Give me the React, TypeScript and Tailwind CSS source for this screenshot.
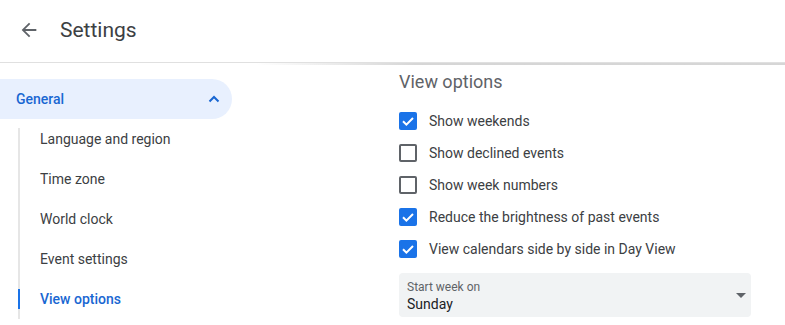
import React from "react";

const items = [
  { label: "Language and region", active: false },
  { label: "Time zone", active: false },
  { label: "World clock", active: false },
  { label: "Event settings", active: false },
  { label: "View options", active: true },
];

const options = [
  { label: "Show weekends", checked: true },
  { label: "Show declined events", checked: false },
  { label: "Show week numbers", checked: false },
  { label: "Reduce the brightness of past events", checked: true },
  { label: "View calendars side by side in Day View", checked: true },
];

function Checkbox({ checked }: { checked: boolean }) {
  if (checked) {
    return (
      <span className="flex h-[18px] w-[18px] shrink-0 items-center justify-center rounded-[2px] bg-[#1a73e8]">
        <svg width="18" height="18" viewBox="0 0 18 18">
          <polyline
            points="4,9.2 7.4,12.6 14,6"
            fill="none"
            stroke="#ffffff"
            strokeWidth="2"
          />
        </svg>
      </span>
    );
  }
  return (
    <span className="block h-[18px] w-[18px] shrink-0 rounded-[2px] border-2 border-[#5f6368]" />
  );
}

export default function App() {
  return (
    <div
      className="h-[325px] w-[785px] overflow-hidden bg-white"
      style={{ fontFamily: "Roboto, 'Noto Sans', sans-serif" }}
    >
      <header className="flex h-[63px] items-center border-b border-[#e0e0e0] pb-[2px] pl-[18px]">
        <svg width="22" height="22" viewBox="0 0 24 24" fill="#5f6368">
          <path d="M20 11H7.83l5.59-5.59L12 4l-8 8 8 8 1.41-1.41L7.83 13H20v-2z" />
        </svg>
        <span className="ml-[20px] text-[21px] leading-[28px] text-[#3c4043]">
          Settings
        </span>
      </header>
      <div className="flex">
        <nav className="w-[256px] shrink-0 pt-[16px]">
          <div className="flex h-10 w-[232px] items-center justify-between rounded-r-full bg-[#e8f0fe] pl-4 pr-[12px]">
            <span className="text-[14px] font-medium text-[#1967d2]">General</span>
            <svg width="12" height="8" viewBox="0 0 12 8">
              <polyline
                points="1.5,6.5 6,2 10.5,6.5"
                fill="none"
                stroke="#1967d2"
                strokeWidth="2"
              />
            </svg>
          </div>
          <div className="relative ml-[18px]">
            <span className="absolute bottom-0 left-0 top-[9px] w-[2px] bg-[#e6e6e6]" />
            {items.map((it) => (
              <div
                key={it.label}
                className="relative flex h-10 items-center pl-[22px] text-[14px]"
              >
                {it.active && (
                  <span className="absolute left-0 top-[10px] h-5 w-[2px] bg-[#1a73e8]" />
                )}
                <span
                  className={
                    it.active
                      ? "font-medium text-[#1967d2]"
                      : "text-[#3c4043]"
                  }
                >
                  {it.label}
                </span>
              </div>
            ))}
          </div>
        </nav>
        <main className="flex-1">
          <div className="h-[2px] w-full bg-linear-to-r from-transparent to-[#d6d6d6] to-30%" />
          <div className="pl-[143px]">
            <h2 className="mt-[5px] text-[18px] leading-6 font-normal text-[#5f6368]">
              View options
            </h2>
            <div className="mt-[11px] flex flex-col">
              {options.map((o) => (
                <div key={o.label} className="flex h-8 items-center gap-3">
                  <Checkbox checked={o.checked} />
                  <span className="text-[14px] leading-5 text-[#3c4043]">
                    {o.label}
                  </span>
                </div>
              ))}
            </div>
            <div className="relative mt-2 flex h-[44px] w-[352px] flex-col rounded bg-[#f1f3f4] pl-2 pt-[6px]">
              <span className="text-[12px] leading-4 text-[#5f6368]">Start week on</span>
              <span className="text-[14px] leading-[18px] text-[#202124]">Sunday</span>
              <svg
                className="absolute right-[5px] top-[20px]"
                width="10"
                height="5"
                viewBox="0 0 10 5"
              >
                <polygon points="0,0 10,0 5,5" fill="#5f6368" />
              </svg>
            </div>
          </div>
        </main>
      </div>
    </div>
  );
}
